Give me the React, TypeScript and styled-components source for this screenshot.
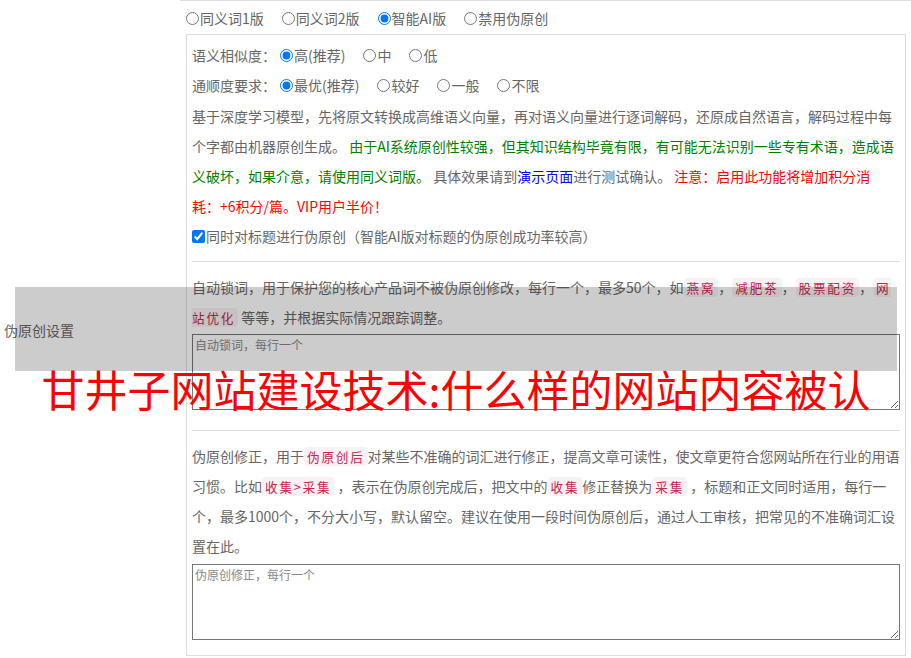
import React from 'react';
import styled, { createGlobalStyle } from 'styled-components';

const GlobalStyle = createGlobalStyle`
  html, body {
    margin: 0;
    padding: 0;
    overflow: hidden;
    background: #fff;
  }
  body {
    font-family: "Microsoft YaHei", "Noto Sans CJK SC", sans-serif;
    font-size: 14px;
    color: #666;
  }
`;

// --- Layout ---

const SettingsRow = styled.div`
  position: relative;
  display: grid;
  grid-template-columns: 180px 1fr;
`;

const LabelCell = styled.div`
  display: flex;
  align-items: center;
  padding-left: 4px;
  line-height: 20px;
`;

const FieldCell = styled.div`
  border-top: 1px solid #ddd;
  padding: 2px 5px 3px 6px;
  line-height: 30px;
`;

const OptionRow = styled.div`
  white-space: nowrap;
`;

const Option = styled.label`
  margin-right: 18px;
  white-space: nowrap;
  cursor: pointer;
`;

const Radio = styled.input.attrs({ type: 'radio' })`
  width: 13px;
  height: 13px;
  margin: 0 1px 0 0;
  vertical-align: -1px;
`;

const Checkbox = styled.input.attrs({ type: 'checkbox' })`
  width: 13px;
  height: 13px;
  margin: 0 1px 0 0;
  vertical-align: -1px;
`;

const Panel = styled.div`
  margin-top: 1px;
  border: 1px solid #ddd;
  padding: 5px 5px 15px;
`;

const FieldLabel = styled.span`
  margin-right: 4px;
`;

const Para = styled.p<{ $top?: number }>`
  margin: ${({ $top }) => $top ?? 0}px 0 0;
`;

const Green = styled.span`
  color: #008000;
`;

const Red = styled.span`
  color: #f00;
`;

const Keep = styled.span`
  white-space: nowrap;
`;

const DemoLink = styled.a`
  color: #00f;
  text-decoration: none;
`;

const Keyword = styled.code`
  font-family: inherit;
  font-size: 90%;
  line-height: 1;
  letter-spacing: 1.8px;
  padding: 0 3px;
  color: #c7254e;
  background: #f9f2f4;
  border-radius: 4px;
`;

const Divider = styled.div<{ $top?: number }>`
  height: 1px;
  background: #ddd;
  margin: ${({ $top }) => $top ?? 10}px 0 10px;
`;

const Textarea = styled.textarea<{ $top: number }>`
  display: block;
  box-sizing: border-box;
  width: 100%;
  height: 76px;
  margin: ${({ $top }) => $top}px 0 0;
  padding: 2px;
  border: 1px solid #767676;
  font-family: inherit;
  font-size: 12px;
  line-height: 16px;
  color: #333;

  &::placeholder {
    color: #888;
  }
`;

// --- Ad overlay ---

const AdOverlay = styled.div`
  position: absolute;
  left: 15px;
  top: 287px;
  width: 882px;
  pointer-events: none;
`;

const AdBand = styled.div`
  height: 84px;
  background: rgba(0, 0, 0, 0.2);
`;

const AdTitle = styled.div`
  margin-top: -4px;
  text-align: center;
  white-space: nowrap;
  color: #f00;
  font-size: 43px;
  line-height: 43px;
`;

const modes = ['同义词1版', '同义词2版', '智能AI版', '禁用伪原创'];
const similarity = ['高(推荐)', '中', '低'];
const fluency = ['最优(推荐)', '较好', '一般', '不限'];

export default function App() {
  return (
    <>
      <GlobalStyle />
      <SettingsRow>
        <LabelCell>伪原创设置</LabelCell>
        <FieldCell>
          <OptionRow>
            {modes.map((m, i) => (
              <Option key={m}>
                <Radio name="mode" defaultChecked={i === 2} />
                {m}
              </Option>
            ))}
          </OptionRow>

          <Panel>
            <OptionRow>
              <FieldLabel>语义相似度：</FieldLabel>
              {similarity.map((s, i) => (
                <Option key={s}>
                  <Radio name="similarity" defaultChecked={i === 0} />
                  {s}
                </Option>
              ))}
            </OptionRow>
            <OptionRow>
              <FieldLabel>通顺度要求：</FieldLabel>
              {fluency.map((s, i) => (
                <Option key={s}>
                  <Radio name="fluency" defaultChecked={i === 0} />
                  {s}
                </Option>
              ))}
            </OptionRow>

            <Para $top={1}>
              基于深度学习模型，先将原文转换成高维语义向量，再对语义向量进行逐词解码，还原成自然语言，解码过程中每个字都由机器原创生成。{' '}
              <Green>由于AI系统原创性较强，但其知识结构毕竟有限，有可能无法识别一些专有术语，造成语义破坏，如果介意，请使用同义词版。</Green>{' '}
              具体效果请到<DemoLink href="#">演示页面</DemoLink>进行测试确认。{' '}
              <Red>
                注意：启用此功能将增加积分消<Keep>耗：+6积分</Keep>/篇。VIP用户半价！
              </Red>
            </Para>

            <OptionRow>
              <Option>
                <Checkbox defaultChecked />
                同时对标题进行伪原创（智能AI版对标题的伪原创成功率较高）
              </Option>
            </OptionRow>

            <Divider />

            <Para>
              自动锁词，用于保护您的核心产品词不被伪原创修改，每行一个，最多50个，如<Keyword>燕窝</Keyword>，<Keyword>减肥茶</Keyword>，<Keyword>股票配资</Keyword>，<Keyword>网站优化</Keyword> 等等，并根据实际情况跟踪调整。
            </Para>
            <Textarea $top={2} placeholder="自动锁词，每行一个" />

            <Divider $top={20} />

            <Para>
              伪原创修正，用于<Keyword>伪原创后</Keyword>对某些不准确的词汇进行修正，提高文章可读性，使文章更符合您网站所在行业的用语习惯。比如<Keyword>收集&gt;采集</Keyword> ，表示在伪原创完成后，把文中的<Keyword>收集</Keyword>修正替换为<Keyword>采集</Keyword> ，标题和正文同时适用，每行一个，最多1000个，不分大小写，默认留空。建议在使用一段时间伪原创后，通过人工审核，把常见的不准确词汇设置在此。
            </Para>
            <Textarea $top={3} placeholder="伪原创修正，每行一个" />
          </Panel>
        </FieldCell>

        <AdOverlay>
          <AdBand />
          <AdTitle>甘井子网站建设技术:什么样的网站内容被认</AdTitle>
        </AdOverlay>
      </SettingsRow>
    </>
  );
}
